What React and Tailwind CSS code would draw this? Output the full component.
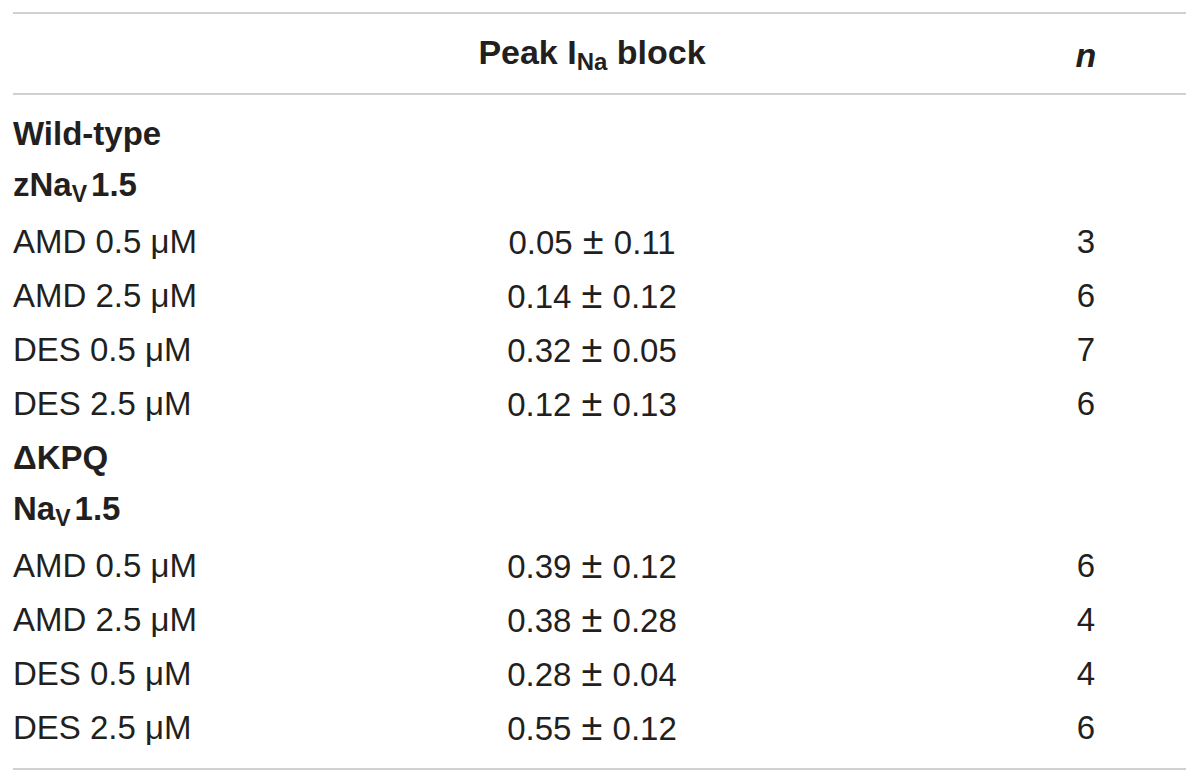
import React from "react";

const rows = [
  { type: "group", label: "Wild-type" },
  { type: "group", label: ["zNa", "V", "1.5"] },
  { label: "AMD 0.5 μM", v: ["0.05", "0.11"], n: "3" },
  { label: "AMD 2.5 μM", v: ["0.14", "0.12"], n: "6" },
  { label: "DES 0.5 μM", v: ["0.32", "0.05"], n: "7" },
  { label: "DES 2.5 μM", v: ["0.12", "0.13"], n: "6" },
  { type: "group", label: "ΔKPQ" },
  { type: "group", label: ["Na", "V", "1.5"] },
  { label: "AMD 0.5 μM", v: ["0.39", "0.12"], n: "6" },
  { label: "AMD 2.5 μM", v: ["0.38", "0.28"], n: "4" },
  { label: "DES 0.5 μM", v: ["0.28", "0.04"], n: "4" },
  { label: "DES 2.5 μM", v: ["0.55", "0.12"], n: "6" },
];

function GroupLabel({ label }) {
  if (Array.isArray(label)) {
    return (
      <span>
        {label[0]}
        <span className="text-[23px] align-[-6px] mr-[4px]">{label[1]}</span>
        {label[2]}
      </span>
    );
  }
  return <span>{label}</span>;
}

export default function App() {
  return (
    <div
      className="w-[1200px] h-[782px] bg-white text-[#231f20] pt-[12px] pl-[13px]"
      style={{ fontFamily: '"Liberation Sans", Arial, sans-serif' }}
    >
      <div className="w-[1173px]">
        <div className="h-[2px] bg-[#d0d0d0]" />
        <div className="grid grid-cols-[385px_388px_400px] h-[79px] items-center text-[34px] font-bold leading-none">
          <div />
          <div className="text-center pt-[2px]">
            Peak I<span className="text-[24px] align-[-6px]">Na</span> block
          </div>
          <div className="pl-[200px] text-center italic pt-[2px]">n</div>
        </div>
        <div className="h-[2px] bg-[#d0d0d0]" />
        <div className="pt-[11px] pb-[14px]">
          {rows.map((r, i) =>
            r.type === "group" ? (
              <div
                key={i}
                className="h-[54px] flex items-center text-[33px] font-bold leading-none"
              >
                <GroupLabel label={r.label} />
              </div>
            ) : (
              <div
                key={i}
                className="grid grid-cols-[385px_388px_400px] h-[54px] items-center text-[33px] leading-none"
              >
                <div>{r.label}</div>
                <div className="text-center [word-spacing:1px]">
                  {r.v[0]} <span className="text-[38px] leading-none">±</span> {r.v[1]}
                </div>
                <div className="pl-[200px] text-center">{r.n}</div>
              </div>
            )
          )}
        </div>
        <div className="h-[2px] bg-[#d0d0d0]" />
      </div>
    </div>
  );
}
